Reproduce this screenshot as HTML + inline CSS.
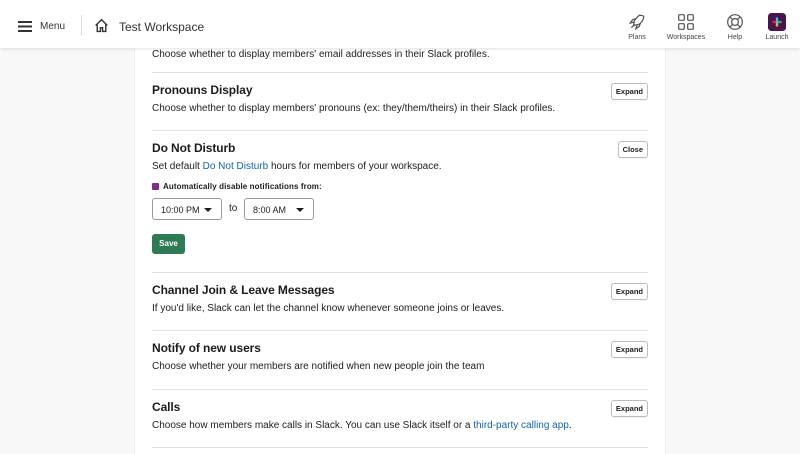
<!DOCTYPE html>
<html><head><meta charset="utf-8"><style>
*{box-sizing:border-box;margin:0;padding:0}
body{width:800px;height:454px;overflow:hidden;background:#f8f8f8;font-family:"Liberation Sans",sans-serif;color:#1d1c1d;position:relative}
.hdr{position:absolute;top:0;left:0;width:800px;height:48px;background:#fff;box-shadow:0 1px 3px rgba(0,0,0,.12);z-index:2}
.panel{position:absolute;left:134px;top:0;width:532px;height:454px;background:#fff;border-left:1px solid #eee;border-right:1px solid #eee}
.sec{position:absolute;left:152px;width:496px}
.t{font-weight:bold;font-size:12px;letter-spacing:-.1px}
.d{font-size:10px;color:#1d1c1d;margin-top:6px}
.btn{position:absolute;right:0;font-size:7.5px;font-weight:bold;border:1px solid #bbb;border-radius:3px;background:#fff;padding:3px 4px;box-shadow:0 1px 1px rgba(0,0,0,.05)}
.hr{position:absolute;left:152px;width:496px;height:1px;background:#e2e2e2}
a{color:#1264a3;text-decoration:none}
.ic{position:absolute;top:13px;text-align:center;font-size:7px;color:#444}
.ic svg{width:18px;height:18px}
.sel{position:absolute;height:22px;border:1px solid #999;border-radius:3px;font-size:9px;padding:6px 8px}
.sel:after{content:"";position:absolute;right:9px;top:9px;border:4px solid transparent;border-top:4px solid #1d1c1d}
</style></head><body>
<div class="hdr">
<svg style="position:absolute;left:18px;top:21px" width="14" height="11"><rect y="0" width="14" height="2" fill="#333"/><rect y="4.5" width="14" height="2" fill="#333"/><rect y="9" width="14" height="2" fill="#333"/></svg>
<div style="position:absolute;left:40px;top:21px;font-size:10px;color:#333">Menu</div>
<div style="position:absolute;left:81px;top:15px;width:1px;height:21px;background:#ddd"></div>
<svg style="position:absolute;left:94px;top:18px" width="15" height="15" viewBox="0 0 14 14"><path d="M1.5 7 7 1.5 12.5 7M3 5.5V12.5h3V9h2v3.5h3V5.5" fill="none" stroke="#333" stroke-width="1.3"/></svg>
<div style="position:absolute;left:119px;top:20px;font-size:12px;color:#333">Test Workspace</div>
<div class="ic" style="left:623px;width:28px"><svg viewBox="0 0 16 16"><path d="M3 13 6 10M10 2c3 0 4 1 4 1s0 4-4 7l-4 1-1-1 1-4c3-3 4-4 4-4zM5 8 2 9l2-3 3-1M8 11l-1 3 3-2 1-3" fill="none" stroke="#555" stroke-width="1.1"/></svg><div style="margin-top:1px">Plans</div></div>
<div class="ic" style="left:665px;width:42px"><svg viewBox="0 0 16 16" fill="none" stroke="#555" stroke-width="1.1"><rect x="1.5" y="1.5" width="5" height="5" rx="1"/><rect x="9.5" y="1.5" width="5" height="5" rx="1"/><rect x="1.5" y="9.5" width="5" height="5" rx="1"/><rect x="9.5" y="9.5" width="5" height="5" rx="1"/></svg><div style="margin-top:1px">Workspaces</div></div>
<div class="ic" style="left:722px;width:26px"><svg viewBox="0 0 16 16" fill="none" stroke="#555" stroke-width="1.1"><circle cx="8" cy="8" r="6.5"/><circle cx="8" cy="8" r="3"/><path d="M3.5 3.5 6 6M12.5 3.5 10 6M3.5 12.5 6 10M12.5 12.5 10 10"/></svg><div style="margin-top:1px">Help</div></div>
<div class="ic" style="left:761px;width:32px"><svg viewBox="0 0 16 16"><rect width="16" height="16" rx="3" fill="#4a154b"/><rect x="4" y="7" width="8" height="2" fill="#e01e5a"/><rect x="7" y="4" width="2" height="8" fill="#36c5f0"/><rect x="9" y="7" width="3" height="2" fill="#2eb67d"/><rect x="7" y="9" width="2" height="3" fill="#ecb22e"/></svg><div style="margin-top:1px">Launch</div></div>
</div>
<div class="panel"></div>
<div class="sec" style="top:43px"><div class="d">Choose whether to display members' email addresses in their Slack profiles.</div></div>
<div class="hr" style="top:72px"></div>
<div class="sec" style="top:83px"><div class="t">Pronouns Display</div><div class="d">Choose whether to display members' pronouns (ex: they/them/theirs) in their Slack profiles.</div><div class="btn" style="top:0">Expand</div></div>
<div class="hr" style="top:130px"></div>
<div class="sec" style="top:141px"><div class="t">Do Not Disturb</div><div class="d">Set default <a>Do Not Disturb</a> hours for members of your workspace.</div><div class="btn" style="top:0;right:0">Close</div>
<div style="position:absolute;top:41px;left:0;font-size:8px;font-weight:bold;letter-spacing:.1px"><span style="display:inline-block;width:7px;height:7px;background:#7c3085;border-radius:1px;vertical-align:-1px;margin-right:4px"></span>Automatically disable notifications from:</div>
<div class="sel" style="top:57px;left:0;width:70px">10:00 PM</div>
<div style="position:absolute;top:62px;left:77px;font-size:10px">to</div>
<div class="sel" style="top:57px;left:92px;width:70px">8:00 AM</div>
<div style="position:absolute;top:93px;left:0;width:33px;height:20px;background:#2e7a55;border-radius:3px;color:#fff;font-size:8px;font-weight:bold;text-align:center;line-height:20px">Save</div>
</div>
<div class="hr" style="top:272px"></div>
<div class="sec" style="top:283px"><div class="t">Channel Join &amp; Leave Messages</div><div class="d">If you'd like, Slack can let the channel know whenever someone joins or leaves.</div><div class="btn" style="top:0">Expand</div></div>
<div class="hr" style="top:330px"></div>
<div class="sec" style="top:341px"><div class="t">Notify of new users</div><div class="d">Choose whether your members are notified when new people join the team</div><div class="btn" style="top:0">Expand</div></div>
<div class="hr" style="top:389px"></div>
<div class="sec" style="top:400px"><div class="t">Calls</div><div class="d">Choose how members make calls in Slack. You can use Slack itself or a <a>third-party calling app</a>.</div><div class="btn" style="top:0">Expand</div></div>
<div class="hr" style="top:447px"></div>
</body></html>
